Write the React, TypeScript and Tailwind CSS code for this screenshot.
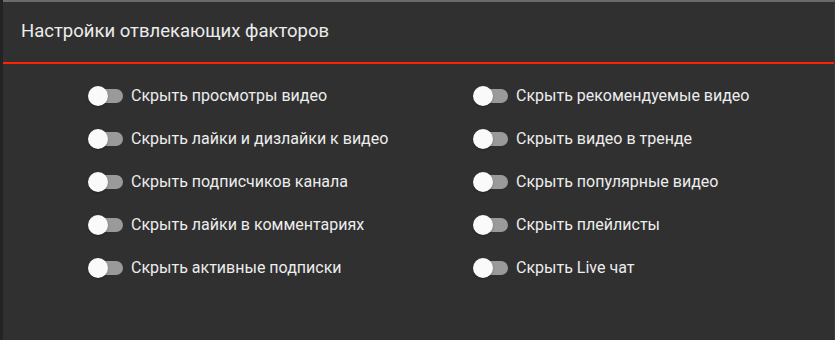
const left = [
  'Скрыть просмотры видео',
  'Скрыть лайки и дизлайки к видео',
  'Скрыть подписчиков канала',
  'Скрыть лайки в комментариях',
  'Скрыть активные подписки',
];

const right = [
  'Скрыть рекомендуемые видео',
  'Скрыть видео в тренде',
  'Скрыть популярные видео',
  'Скрыть плейлисты',
  'Скрыть Live чат',
];

function Toggle() {
  return (
    <span className="relative inline-block h-5 w-[35px] shrink-0" aria-hidden>
      <span className="absolute left-[10px] top-[3px] h-[14px] w-[25px] rounded-full bg-[#9a9a9a]" />
      <span className="absolute left-0 top-0 h-5 w-5 rounded-full bg-[#fafafa] shadow-[0_1px_2px_rgba(0,0,0,0.3)]" />
    </span>
  );
}

function Row({ label }: { label: string }) {
  return (
    <div className="flex h-[43px] items-center gap-2">
      <Toggle />
      <span className="text-[16px] text-[#ededed]">{label}</span>
    </div>
  );
}

export default function App() {
  return (
    <div
      className="flex h-[340px] w-[835px] bg-[#232323]"
      style={{ fontFamily: 'Roboto, "Noto Sans", sans-serif' }}
    >
      <div className="ml-[3px] flex flex-1 flex-col border-t-2 border-r border-t-[#6b6b6b] border-r-[#3a3a3a] bg-[#303030]">
        <header className="flex h-[62px] items-center border-b-2 border-[#ff2200] px-[18px]">
          <h1 className="text-[18.5px] text-[#ececec]">Настройки отвлекающих факторов</h1>
        </header>
        <div className="grid grid-cols-[385px_1fr] pl-[85px] pt-[10px]">
          <div className="flex flex-col">
            {left.map((l) => (
              <Row key={l} label={l} />
            ))}
          </div>
          <div className="flex flex-col">
            {right.map((l) => (
              <Row key={l} label={l} />
            ))}
          </div>
        </div>
      </div>
    </div>
  );
}
